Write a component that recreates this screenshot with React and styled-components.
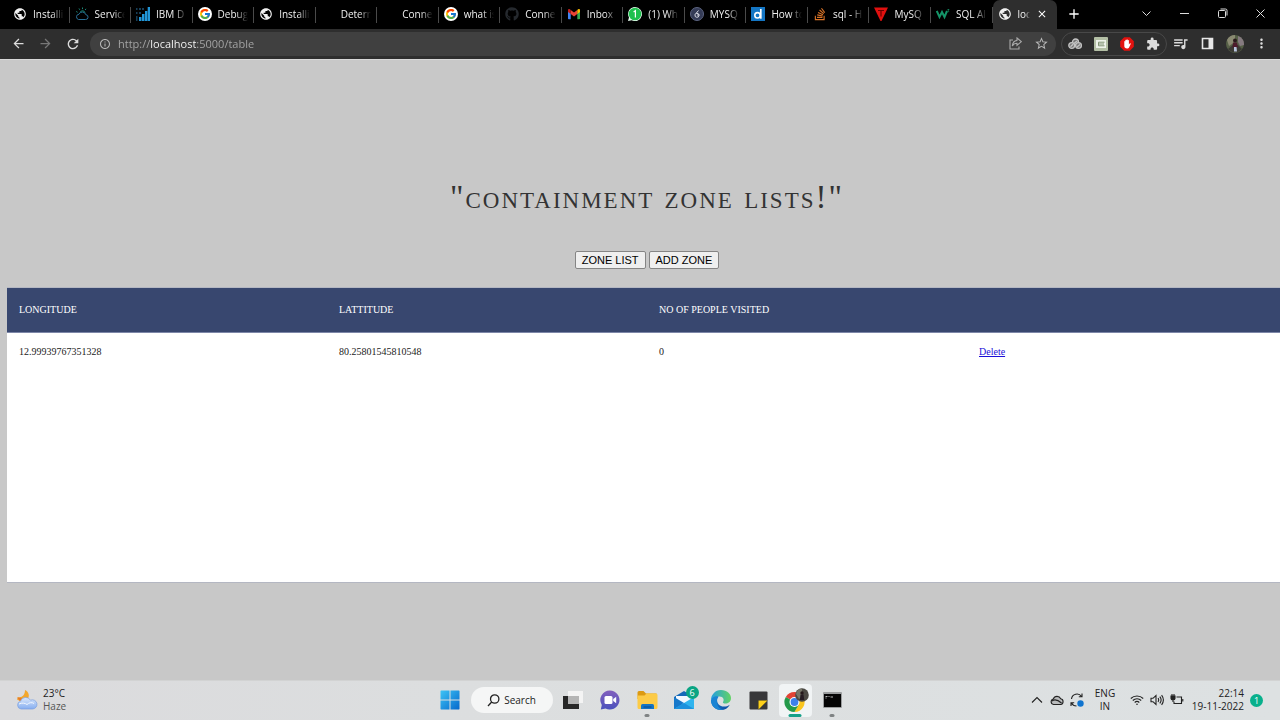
import React from "react";
import styled, { createGlobalStyle, css } from "styled-components";
import { FcGoogle } from "react-icons/fc";
import { FaGithub, FaStackOverflow } from "react-icons/fa";
import {
  MdPublic, MdArrowBack, MdArrowForward, MdRefresh, MdInfoOutline,
  MdStarBorder, MdExtension, MdQueueMusic, MdMoreVert, MdClose, MdAdd,
} from "react-icons/md";

const ui = `"Open Sans", "Noto Sans", sans-serif`;
const serif = `"Liberation Serif", "Times New Roman", serif`;

const GlobalStyle = createGlobalStyle`
  *, *::before, *::after { box-sizing: border-box; }
  html, body { margin: 0; }
  body { background: #c8c8c8; overflow-x: hidden; }
  button { font: inherit; color: inherit; cursor: pointer; }
  svg { display: block; flex: none; }
`;

const Screen = styled.div`
  display: flex;
  flex-direction: column;
  min-height: 100vh;
`;

const PlainButton = styled.button`
  display: flex;
  align-items: center;
  justify-content: center;
  padding: 0;
  border: 0;
  background: none;
`;

/* ---------- browser chrome ---------- */

const TabStrip = styled.div`
  display: flex;
  height: 29px;
  padding-left: 8px;
  background: #000;
  color: #f0f0f0;
  font-family: ${ui};
  font-size: 10px;
`;

const Tabs = styled.div`
  display: flex;
  flex: 1;
  min-width: 0;
`;

const Tab = styled.button`
  display: flex;
  align-items: center;
  flex: 1 1 0;
  min-width: 0;
  gap: 6px;
  padding: 0 ${(p) => (p.$active ? 9 : 6)}px 2px 5px;
  border: 0;
  background: ${(p) =>
    p.$active
      ? "#2e2e2e"
      : "linear-gradient(#4a4a4a, #4a4a4a) right center / 1px 16px no-repeat"};
  border-radius: ${(p) => (p.$active ? "7px 7px 0 0" : "0")};
`;

const TabTitle = styled.span`
  flex: 1;
  min-width: 0;
  overflow: hidden;
  white-space: nowrap;
  text-align: left;
  line-height: 16px;
  mask-image: linear-gradient(to right, #000 60%, transparent);
`;

const WindowControls = styled.div`
  display: flex;
  justify-content: space-between;
  width: 223px;
  padding: 0 1px 2px 0;
`;

const ControlGroup = styled.div`
  display: flex;
`;

const WindowButton = styled(PlainButton)`
  width: ${(p) => p.$width || 38}px;
`;

const Toolbar = styled.div`
  display: flex;
  align-items: center;
  height: 30px;
  padding: 0 5px 1px;
  background: #2e2e2e;
  color: #dcdcdc;
`;

const ToolButton = styled(PlainButton)`
  width: ${(p) => (p.$narrow ? 26 : 27)}px;
  height: 24px;
  color: ${(p) => (p.$dim ? "#777" : "inherit")};
`;

const AddressBar = styled.div`
  display: flex;
  align-items: center;
  flex: 1;
  height: 24px;
  margin-left: 4px;
  padding: 0 2px 0 9px;
  border-radius: 12px;
  background: #404040;
  color: #b8b8b8;
`;

const AddressInput = styled.input`
  flex: 1;
  min-width: 0;
  margin-left: 7px;
  padding: 0;
  border: 0;
  outline: 0;
  background: linear-gradient(to right, #a8a8a8 32px, #fff 32px, #fff 78px, #a8a8a8 78px);
  background-clip: text;
  color: transparent;
  caret-color: #fff;
  font-family: ${ui};
  font-size: 11px;
  line-height: 16px;
`;

const Extensions = styled.div`
  display: flex;
  align-items: center;
  height: 24px;
  margin-left: 5px;
  border: 1px solid #484848;
  border-radius: 12px;
`;

/* ---------- web page ---------- */

const Page = styled.main`
  flex: 1;
  padding-left: 7px;
  border-top: 1px solid #d8d8d8;
  background: #c8c8c8;
  overflow: hidden;
  font-family: ${serif};
`;

const Content = styled.div`
  width: 100vw;
`;

const Title = styled.h1`
  margin: 119px 0 0;
  color: #333;
  font-size: 33px;
  font-weight: 400;
  font-variant: small-caps;
  letter-spacing: 2px;
  line-height: 36px;
  text-align: center;
`;

const Actions = styled.div`
  display: flex;
  justify-content: center;
  gap: 3px;
  margin-top: 36px;
`;

const ActionButton = styled.button`
  height: 18px;
  padding: 0 6px;
  border: 1px solid #858585;
  border-radius: 2px;
  background: #efefef;
  color: #000;
  font-family: "Liberation Sans", Arial, sans-serif;
  font-size: 11px;
  line-height: 16px;
`;

const Panel = styled.section`
  min-height: 296px;
  margin: 18px 0 96px;
  border: 1px solid #b4b7c2;
  border-width: 1px 0;
  background: #fff;
`;

const Table = styled.table`
  width: 100%;
  border-collapse: collapse;
  table-layout: fixed;
  font-size: 10px;
  line-height: 12px;
`;

const cell = css`
  text-align: left;
  font-weight: 400;
`;

const HeadCell = styled.th`
  ${cell}
  height: 44px;
  padding: 0 12px;
  border-bottom: 1px solid #7d87a8;
  background: #38476f;
  color: #fff;
  text-transform: uppercase;
`;

const Cell = styled.td`
  ${cell}
  height: 40px;
  padding: 0 12px;
  color: #222;
`;

const DeleteLink = styled.a`
  color: #1a0fd8;
  text-decoration: underline;
`;

/* ---------- taskbar ---------- */

const Taskbar = styled.footer`
  display: grid;
  grid-template-columns: 1fr auto 1fr;
  align-items: center;
  height: 40px;
  padding-bottom: 1px;
  border-top: 1px solid #d2d3d3;
  background: linear-gradient(to right, #dbdbdd, #dcdedf 35%, #dde1e2);
  color: #222;
  font-family: ${ui};
  font-size: 10px;
  line-height: 13px;
`;

const Weather = styled.div`
  display: flex;
  align-items: center;
  gap: 5px;
  padding-left: 16px;
`;

const Lines = styled.div`
  display: flex;
  flex-direction: column;
  align-items: ${(p) => p.$align || "flex-start"};
  white-space: nowrap;
`;

const Muted = styled.span`
  color: #555;
`;

const Apps = styled.div`
  display: flex;
  align-items: center;
  padding-left: 2px;
`;

const AppButton = styled(PlainButton)`
  position: relative;
  width: 33px;
  height: 33px;
  margin: 0 2px;
  border-radius: 4px;
  background: ${(p) => (p.$active ? "#f1f4f5" : "none")};
  &::after {
    content: "";
    display: ${(p) => (p.$open || p.$active ? "block" : "none")};
    position: absolute;
    bottom: 0;
    left: 50%;
    width: ${(p) => (p.$active ? 13 : 5)}px;
    height: 3px;
    border-radius: 2px;
    background: ${(p) => (p.$active ? "#15a088" : "#7f8384")};
    transform: translateX(-50%);
  }
`;

const Count = styled.span`
  position: absolute;
  top: 2px;
  right: 2px;
  width: 13px;
  height: 13px;
  border-radius: 50%;
  background: #0aa584;
  color: #fff;
  text-align: center;
  font-size: 9px;
  line-height: 13px;
`;

const SearchButton = styled(PlainButton)`
  gap: 4px;
  width: 82px;
  height: 26px;
  margin: 0 2px;
  border-radius: 13px;
  background: #f5f6f6;
`;

const Tray = styled.div`
  display: flex;
  align-items: center;
  justify-content: flex-end;
  padding-right: 17px;
`;

const TrayButton = styled(PlainButton)`
  width: 20px;
  height: 24px;
`;

const Language = styled(PlainButton)`
  width: 36px;
  margin-right: 4px;
`;

const Clock = styled(PlainButton)`
  width: 57px;
  margin-right: 6px;
  justify-content: flex-end;
`;

const Notice = styled.span`
  width: 13px;
  height: 13px;
  border-radius: 50%;
  background: #08b08c;
  color: #fff;
  text-align: center;
  font-size: 9px;
  line-height: 13px;
`;

/* ---------- drawings ---------- */

const Blank = () => <svg width="14" height="14" />;
const Globe = () => <MdPublic size={14} color="#f0f0f0" />;
const Google = () => (
  <svg width="14" height="14" viewBox="0 0 14 14">
    <circle cx="7" cy="7" r="7" fill="#fff" />
    <FcGoogle x="1" y="1" size={12} />
  </svg>
);
const CloudTab = () => (
  <svg width="14" height="14" viewBox="0 0 14 14" fill="none" stroke="#2a6f96" strokeWidth="1">
    <path d="M3.5 12.5h7a2.4 2.4 0 0 0 .3-4.8A3.6 3.6 0 0 0 4 7.2a2.7 2.7 0 0 0-.5 5.3z" />
    <path d="M4 1.5l.8 1.3M7.5.5v1.6M11 1.8l-.8 1.2M1.2 4.5l1.4.8M5.2 5.2a2.6 2.6 0 0 1 4.8.4" stroke="#1c8a78" />
  </svg>
);
const IbmTab = () => (
  <svg width="14" height="14" viewBox="0 0 14 14">
    <path d="M3 10h2.500v4H3zM6 7h2.500v7H6zM9 4h2.300v10H9zM11.700 0H14v14h-2.300z" fill="#2196d8" />
    <path d="M0 1h1.500v2H0zM3 1h2v2H3zM0 5h1.500v2H0zM3 5h2v2H3zM6 1h2v2H6zM0 9h1.500v5H0z" fill="#173f58" />
  </svg>
);
const Gmail = () => (
  <svg width="14" height="12" viewBox="0 0 14 12">
    <path d="M1 3v7.500a.7.7 0 0 0 .7.7h2V5z" fill="#4285f4" />
    <path d="M13 3v7.500a.7.7 0 0 1-.7.7h-2V5z" fill="#34a853" />
    <path d="M3.700 2v4L7 8.500 10.300 6V2L7 4.600z" fill="#ea4335" />
    <path d="M1 2.200v1.800l2.700 2V2C2.600.4 1 .9 1 2.200z" fill="#c5221f" />
    <path d="M13 2.200v1.800l-2.700 2V2C11.400.4 13 .9 13 2.200z" fill="#fbbc04" />
  </svg>
);
const WhatsApp = () => (
  <svg width="14" height="14" viewBox="0 0 14 14">
    <path d="M7 0a7 7 0 1 1-3.300 13.200L0 14l1-3.500A7 7 0 0 1 7 0z" fill="#e9fff0" />
    <circle cx="7" cy="7" r="6.300" fill="#1fc04e" />
    <path d="M5.600 5l1.800-1.300V10.500" stroke="#fff" strokeWidth="1.200" fill="none" />
  </svg>
);
const Badge = () => (
  <svg width="14" height="14" viewBox="0 0 14 14" fill="none">
    <circle cx="7" cy="7" r="6.500" fill="#343b56" stroke="#5c6480" />
    <path d="M8.500 3.500L6 6.500M5 8a2 2 0 1 0 2-1.700c-1.200 0-2 .7-2 1.700zM7 8h2.500" stroke="#d8dae4" />
  </svg>
);
const Dtab = () => (
  <svg width="14" height="14" viewBox="0 0 14 14">
    <rect width="14" height="14" fill="#1476c4" />
    <circle cx="6.500" cy="8.300" r="2.700" fill="none" stroke="#fff" strokeWidth="1.600" />
    <path d="M9.800 2v9.700" stroke="#fff" strokeWidth="1.700" />
  </svg>
);
const RedTri = () => (
  <svg width="14" height="14" viewBox="0 0 14 14">
    <path d="M0 .5h14L7.500 14h-1z" fill="#e0100f" />
    <path d="M4 3.500h6M7 3.500V9.500" stroke="#6a0000" strokeWidth="1.200" />
  </svg>
);
const Wtab = () => (
  <svg width="14" height="14" viewBox="0 0 14 14" fill="none" stroke="#149468">
    <path d="M.8 4l2.700 6L6 5l2.500 5L11 4" strokeWidth="2" />
    <path d="M11.500 2.500h1.500l-1 1.200c1 0 1 1.500-.5 1.300" strokeWidth=".8" />
  </svg>
);
const Share = () => (
  <svg width="13" height="13" viewBox="0 0 13 13" fill="none" stroke="#aaa" strokeWidth="1.100">
    <path d="M4 3H1v9h9V9.500" />
    <path d="M8 1l4.300 3.700L8 8.300V6.300C5.800 6.300 4.500 7 3.300 9c.3-3 2-5.200 4.700-5.600z" />
  </svg>
);
const Rings = () => (
  <svg width="14" height="12" viewBox="0 0 14 12" fill="#777" stroke="#c4c4c4" strokeWidth="1.300">
    <circle cx="7.500" cy="4" r="3" />
    <circle cx="3.700" cy="7.500" r="2.900" />
    <circle cx="10.500" cy="7.500" r="2.900" />
    <path d="M2.500 8.700l2.600-2.400M9 9l3-2.500M6 5.500l3-2.500" />
  </svg>
);
const GreenBox = () => (
  <svg width="14" height="14" viewBox="0 0 14 14">
    <rect width="14" height="14" rx="1" fill="#b3bfa5" />
    <rect x="2" y="3" width="10" height="8" fill="#eef2ea" />
    <path d="M10.500 5.200H4.500v3.600h6M5 7h5" stroke="#7f9172" fill="none" />
  </svg>
);
const Hand = () => (
  <svg width="14" height="14" viewBox="0 0 14 14">
    <path d="M4.200.2h5.600l4 4v5.600l-4 4H4.200l-4-4V4.200z" fill="#e3120f" />
    <path d="M4.300 7V4.500c0-.8 1-.8 1 0V3.300c0-.9 1.200-.9 1.200 0V2.900c0-.9 1.200-.9 1.200 0v.7c0-.9 1.200-.9 1.200 0v4l.8-1c.5-.6 1.300-.2 1 .5L9.300 10c-.5 1-1.200 1.500-2.300 1.500-1.700 0-2.700-1-2.700-2.500z" fill="#fff" />
  </svg>
);
const SidePanel = () => (
  <svg width="13" height="13" viewBox="0 0 13 13">
    <path d="M1.500 1.500h10v10h-10z" fill="none" stroke="#e8e8e8" strokeWidth="1.600" />
    <path d="M7.500 1h4.500v11H7.500z" fill="#e8e8e8" />
  </svg>
);
const Avatar = () => (
  <svg width="18" height="18" viewBox="0 0 18 18">
    <circle cx="9" cy="9" r="9" fill="#566047" />
    <path d="M1 5a9 9 0 0 1 8-5v7L3 11z" fill="#8a8a72" />
    <path d="M12 1a9 9 0 0 1 6 9l-4 1-2-4z" fill="#857a80" />
    <path d="M2 14l5-4h5l4 4a9 9 0 0 1-14 0z" fill="#3b3a34" />
    <circle cx="9" cy="5.500" r="2" fill="#2a1a1c" />
    <path d="M7 7.500h4l1 5H6.500z" fill="#4d1c2c" />
    <path d="M8 12h2.500l.5 4.500H8z" fill="#b8c3dc" />
  </svg>
);
const Line = ({ d }) => (
  <svg width="11" height="11" viewBox="0 0 11 11" fill="none" stroke="#ddd" strokeWidth="1">
    <path d={d} />
  </svg>
);
const WeatherIcon = () => (
  <svg width="22" height="20" viewBox="0 0 22 20">
    <defs>
      <linearGradient id="cloudFill" x2="0" y2="1">
        <stop stopColor="#dbe8fb" />
        <stop offset="1" stopColor="#86aef0" />
      </linearGradient>
    </defs>
    <path d="M9 0c4 2 5 6 2.500 9.500L6 12 1 9.500 2 7c4 1 7-2 7-7z" fill="#f3a72c" />
    <path d="M1 7.500l5 .5-2 3z" fill="#e5792c" />
    <path d="M5 19a4 4 0 0 1-.5-7.800 5.500 5.500 0 0 1 10-1A4.600 4.600 0 1 1 16.500 19z" fill="url(#cloudFill)" stroke="#7b9fdf" strokeWidth=".7" />
    <path d="M3 14c3-1.500 6-1 8 .5 2-2 5-2.500 7-1" stroke="#f1f6ff" fill="none" />
  </svg>
);
const Windows = () => (
  <svg width="20" height="20" viewBox="0 0 20 20">
    <defs>
      <linearGradient id="winFill" x2="1" y2="1">
        <stop stopColor="#3ec4f5" />
        <stop offset="1" stopColor="#0668cc" />
      </linearGradient>
    </defs>
    <path d="M1 .5h8.500v9H.5V1zM10.500.5H19l.5.5v8.500h-9zM.5 10.500h9v9H1l-.5-.5zM10.500 10.500h9V19l-.5.500h-8.500z" fill="url(#winFill)" />
  </svg>
);
const SearchIcon = () => (
  <svg width="13" height="13" viewBox="0 0 13 13" fill="none" stroke="#222" strokeWidth="1.300">
    <circle cx="7.700" cy="5" r="4.200" />
    <path d="M4.700 8L1 12" />
  </svg>
);
const TaskView = () => (
  <svg width="20" height="20" viewBox="0 0 20 20">
    <path d="M0 6h16v13H0z" fill="#272727" />
    <path d="M5 1h15v12H5z" fill="#f4f4f4" />
    <path d="M5 6h11v8H5z" fill="#b5b5b5" />
  </svg>
);
const Chat = () => (
  <svg width="20" height="20" viewBox="0 0 20 20">
    <defs>
      <linearGradient id="chatFill" x2="0" y2="1">
        <stop stopColor="#8360bd" />
        <stop offset="1" stopColor="#4b52bd" />
      </linearGradient>
    </defs>
    <path d="M10 .5a9.500 9.500 0 1 1-4.500 17.900L.8 19.500l1-4.500A9.500 9.500 0 0 1 10 .5z" fill="url(#chatFill)" />
    <rect x="4.500" y="6" width="8" height="8" rx="1.500" fill="#fff" />
    <path d="M13.200 9l3-2.200v6.400l-3-2.200z" fill="#fff" />
  </svg>
);
const Folder = () => (
  <svg width="21" height="18" viewBox="0 0 20 18">
    <path d="M0 1.500Q0 0 1.500 0H6l2.500 2.500H19V8H0z" fill="#dc9a12" />
    <path d="M0 4.500h7L9 2.500h9.500q1.500 0 1.500 1.500v12.500q0 1.500-1.500 1.500h-17Q0 18 0 16.500z" fill="#fccb47" />
    <path d="M3.500 18v-3.500q0-1.500 1.500-1.500h10q1.500 0 1.500 1.500V18z" fill="#1474c4" />
    <path d="M6 16h8" stroke="#0a4e92" strokeWidth="1.200" />
  </svg>
);
const Mail = () => (
  <svg width="20" height="20" viewBox="0 0 20 20">
    <path d="M0 7l10-6 10 6v12H0z" fill="#1469b9" />
    <path d="M2 6h16v8H2z" fill="#f1f8ff" />
    <path d="M0 7l10 6L0 19z" fill="#1678ca" />
    <path d="M20 7v12H0l20-12z" fill="#30b4ee" />
    <path d="M0 19l10-6 10 6z" fill="#1d91dd" />
  </svg>
);
const Edge = () => (
  <svg width="20" height="20" viewBox="0 0 20 20">
    <defs>
      <linearGradient id="edgeTop" x2="1">
        <stop stopColor="#249fdf" />
        <stop offset="1" stopColor="#63d364" />
      </linearGradient>
      <linearGradient id="edgeLow" x2="1" y2="1">
        <stop stopColor="#1b96df" />
        <stop offset="1" stopColor="#0b459d" />
      </linearGradient>
    </defs>
    <path d="M0 10C0 5 4 0 10 0c6 0 10 4 10 8 0 4-3 5.500-5.500 5.500-2 0-3-.7-2.500-1.500 1.500-2 .5-5.500-3.500-5.500C4.500 6.500 1 8 0 10z" fill="url(#edgeTop)" />
    <path d="M7.500 6.700C5 9 6 14 9.500 15.700c3 1.500 6.500 1 9.300-1C17 18 14 20 10 20 4.500 20 0 16 0 10.500 1 7 4.500 5.700 7.500 6.700z" fill="url(#edgeLow)" />
    <path d="M7.500 6.700C4 10 5.500 18 12 19.500 6 21 .5 17 0 10.500 1 7.500 4 6 7.500 6.700z" fill="#1a84d3" />
  </svg>
);
const Notes = () => (
  <svg width="19" height="19" viewBox="0 0 19 19">
    <rect x=".5" y=".5" width="18" height="18" rx="1" fill="#38383a" />
    <path d="M9.500 18.500v-9h9z" fill="#1b1b1c" />
    <path d="M9.500 9.500h9l-9 9z" fill="#fed11b" />
  </svg>
);
const Chrome = () => (
  <svg width="27" height="25" viewBox="0 0 27 25">
    <path d="M12.500 14L3.800 9A10 10 0 0 1 21.200 9z" fill="#e24335" />
    <path d="M12.500 14L3.800 9a10 10 0 0 0 8.700 15z" fill="#23994a" />
    <path d="M12.500 14l8.700-5a10 10 0 0 1-8.700 15l4-7.500z" fill="#f9c51f" />
    <path d="M12.500 24l4.300-7.500h-4.300l-4 0z" fill="#23994a" />
    <circle cx="12.500" cy="14" r="5" fill="#fff" />
    <circle cx="12.500" cy="14" r="3.900" fill="#3d80ea" />
    <circle cx="20" cy="7" r="6.800" fill="#4b4943" />
    <path d="M14 6a6.800 6.800 0 0 1 6-5.500V9l-3 2z" fill="#77776a" />
    <circle cx="20" cy="5" r="1.700" fill="#24181a" />
    <path d="M18.500 6.500h3l.8 5.500h-4.500z" fill="#251c22" />
  </svg>
);
const Terminal = () => (
  <svg width="19" height="16" viewBox="0 0 19 16">
    <rect width="19" height="16" rx="1" fill="#9b9d9e" />
    <rect x="1" y="2" width="17" height="13" fill="#050505" />
    <path d="M2.500 4.500h2M5.500 4.500h1M7.500 5h2.500M2.500 6h1" stroke="#bbb" />
  </svg>
);
const TrayIcon = ({ children }) => (
  <svg width="14" height="14" viewBox="0 0 14 14" fill="none" stroke="#222" strokeWidth="1.100">
    {children}
  </svg>
);

/* ---------- data ---------- */

const tabs = [
  ["Installi", Globe], ["Service", CloudTab], ["IBM D", IbmTab], ["Debug", Google],
  ["Installi", Globe], ["Determ", Blank], ["Conne", Blank], ["what is", Google],
  ["Conne", () => <FaGithub size={14} color="#25292e" />], ["Inbox", Gmail],
  ["(1) Wh", WhatsApp], ["MYSQ", Badge], ["How to", Dtab],
  ["sql - H", () => <FaStackOverflow size={14} color="#d97327" />],
  ["MySQ", RedTri], ["SQL Al", Wtab],
];

const columns = ["Longitude", "Lattitude", "No of people visited", ""];
const zones = [{ longitude: "12.99939767351328", latitude: "80.25801545810548", visited: 0 }];

export default function App() {
  return (
    <Screen>
      <GlobalStyle />
      <header>
        <TabStrip>
          <Tabs>
            {tabs.map(([title, Icon], i) => (
              <Tab key={i}>
                <Icon />
                <TabTitle>{title}</TabTitle>
              </Tab>
            ))}
            <Tab $active>
              <Globe />
              <TabTitle>loc</TabTitle>
              <MdClose size={12} color="#fff" />
            </Tab>
          </Tabs>
          <WindowControls>
            <WindowButton $width={34} aria-label="New tab"><MdAdd size={16} color="#fff" /></WindowButton>
            <ControlGroup>
              <WindowButton aria-label="Search tabs"><Line d="M1.500 3.500l4 4 4-4" /></WindowButton>
              <WindowButton aria-label="Minimize"><Line d="M1 5.500h9" /></WindowButton>
              <WindowButton aria-label="Restore"><Line d="M1.500 3.500q0-1 1-1h5q1 0 1 1v5q0 1-1 1h-5q-1 0-1-1zM3.500 1h5q1.500 0 1.500 1.500v5" /></WindowButton>
              <WindowButton aria-label="Close"><Line d="M1.500 1.500l8 8M9.500 1.500l-8 8" /></WindowButton>
            </ControlGroup>
          </WindowControls>
        </TabStrip>
        <Toolbar>
          <ToolButton aria-label="Back"><MdArrowBack size={15} /></ToolButton>
          <ToolButton aria-label="Forward" $dim><MdArrowForward size={15} /></ToolButton>
          <ToolButton aria-label="Reload"><MdRefresh size={16} /></ToolButton>
          <AddressBar>
            <MdInfoOutline size={12} />
            <AddressInput aria-label="Address" defaultValue="http://localhost:5000/table" />
            <ToolButton $narrow aria-label="Share"><Share /></ToolButton>
            <ToolButton $narrow aria-label="Bookmark"><MdStarBorder size={15} /></ToolButton>
          </AddressBar>
          <Extensions>
            <ToolButton $narrow aria-label="Rings extension"><Rings /></ToolButton>
            <ToolButton $narrow aria-label="Editor extension"><GreenBox /></ToolButton>
            <ToolButton $narrow aria-label="Blocker extension"><Hand /></ToolButton>
            <ToolButton $narrow aria-label="Extensions"><MdExtension size={14} /></ToolButton>
          </Extensions>
          <ToolButton aria-label="Media"><MdQueueMusic size={17} /></ToolButton>
          <ToolButton aria-label="Side panel"><SidePanel /></ToolButton>
          <ToolButton aria-label="Profile"><Avatar /></ToolButton>
          <ToolButton aria-label="Menu"><MdMoreVert size={15} /></ToolButton>
        </Toolbar>
      </header>

      <Page>
        <Content>
          <Title>"containment zone lists!"</Title>
          <Actions>
            <ActionButton>ZONE LIST</ActionButton>
            <ActionButton>ADD ZONE</ActionButton>
          </Actions>
          <Panel>
            <Table>
              <thead>
                <tr>{columns.map((c) => <HeadCell key={c} scope="col">{c}</HeadCell>)}</tr>
              </thead>
              <tbody>
                {zones.map((z) => (
                  <tr key={z.longitude}>
                    <Cell>{z.longitude}</Cell>
                    <Cell>{z.latitude}</Cell>
                    <Cell>{z.visited}</Cell>
                    <Cell><DeleteLink href="#delete">Delete</DeleteLink></Cell>
                  </tr>
                ))}
              </tbody>
            </Table>
          </Panel>
        </Content>
      </Page>

      <Taskbar>
        <Weather>
          <WeatherIcon />
          <Lines><span>23°C</span><Muted>Haze</Muted></Lines>
        </Weather>
        <Apps>
          <AppButton aria-label="Start"><Windows /></AppButton>
          <SearchButton><SearchIcon />Search</SearchButton>
          <AppButton aria-label="Task view"><TaskView /></AppButton>
          <AppButton aria-label="Chat"><Chat /></AppButton>
          <AppButton aria-label="Files" $open><Folder /></AppButton>
          <AppButton aria-label="Mail"><Mail /><Count>6</Count></AppButton>
          <AppButton aria-label="Edge"><Edge /></AppButton>
          <AppButton aria-label="Notes"><Notes /></AppButton>
          <AppButton aria-label="Chrome" $active><Chrome /></AppButton>
          <AppButton aria-label="Terminal" $open><Terminal /></AppButton>
        </Apps>
        <Tray>
          <TrayButton aria-label="Hidden icons"><TrayIcon><path d="M2 9.500l5-5 5 5" /></TrayIcon></TrayButton>
          <TrayButton aria-label="Cloud storage">
            <TrayIcon><path d="M3.500 11.500a2.800 2.800 0 0 1-.2-5.500 4 4 0 0 1 7.400-.2 2.900 2.900 0 0 1 0 5.700z" fill="#b9bbbc" /><path d="M2 8c3-2.500 6-1 9.500 2" /></TrayIcon>
          </TrayButton>
          <TrayButton aria-label="Updates">
            <TrayIcon><path d="M1.500 6a5.500 5.500 0 0 1 10-2.500M12 .5v3.300H8.800M1 13v-3.200h3.200M1.500 10c1 2 3 3 5 3" /><circle cx="10.500" cy="10.500" r="3.200" fill="#0f74cf" stroke="none" /></TrayIcon>
          </TrayButton>
          <Language><Lines $align="center"><span>ENG</span><span>IN</span></Lines></Language>
          <TrayButton aria-label="Network">
            <TrayIcon><path d="M.8 5.500a8.800 8.800 0 0 1 12.400 0M2.800 7.500a6 6 0 0 1 8.400 0M4.700 9.500a3.300 3.300 0 0 1 4.600 0" /><circle cx="7" cy="11.300" r=".8" fill="#222" stroke="none" /></TrayIcon>
          </TrayButton>
          <TrayButton aria-label="Volume">
            <TrayIcon><path d="M1 5.300h2L6 2.500v9L3 8.700H1zM8 5.200q1.400 1.800 0 3.600M9.800 3.700q2.700 3.300 0 6.600M11.600 2.200q3.600 4.800 0 9.600" /></TrayIcon>
          </TrayButton>
          <TrayButton aria-label="Battery">
            <TrayIcon><path d="M6.500 4h5v6.500H4V8.500M12.800 6v2.500" /><path d="M1 3h4v2.500q0 1.500-2 1.500T1 5.500zM2 1v2M4 1v2M3 7v2" fill="#222" /></TrayIcon>
          </TrayButton>
          <Clock><Lines $align="flex-end"><span>22:14</span><span>19-11-2022</span></Lines></Clock>
          <Notice>1</Notice>
        </Tray>
      </Taskbar>
    </Screen>
  );
}
